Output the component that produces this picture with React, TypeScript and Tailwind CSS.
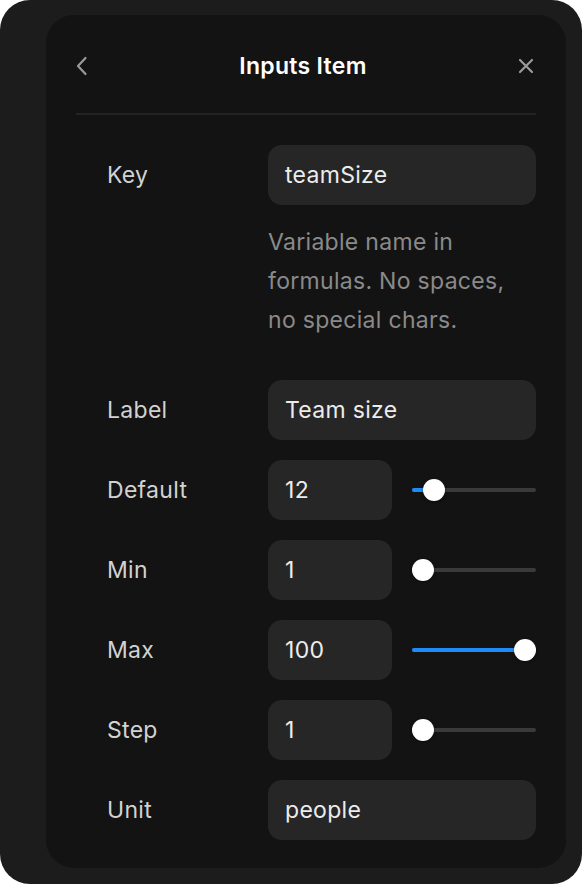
import { useState } from "react";

interface SliderProps {
  value: number;
  min: number;
  max: number;
}

const Slider = ({ value, min, max }: SliderProps) => {
  const frac = (value - min) / (max - min);
  const thumbLeft = frac * (124 - 22);
  return (
    <div className="relative ml-[20px] h-[22px] w-[124px]">
      <div className="absolute left-0 right-0 top-[9px] h-[4px] rounded-full bg-[#3a3a3a]" />
      <div
        className="absolute left-0 top-[9px] h-[4px] rounded-full bg-[#1e8cf5]"
        style={{ width: thumbLeft + 11 }}
      />
      <div
        className="absolute top-0 h-[22px] w-[22px] rounded-full bg-white shadow-[0_1px_3px_rgba(0,0,0,0.5)]"
        style={{ left: thumbLeft }}
      />
    </div>
  );
};

const Row = ({ label, children, className = "" }: { label: string; children: React.ReactNode; className?: string }) => (
  <div className={`flex items-center ${className}`}>
    <div className="w-[192px] pl-[31px] text-[23px] tracking-[0.3px] text-[#d2d2d2]">{label}</div>
    {children}
  </div>
);

const TextField = ({ value }: { value: string }) => (
  <div className="flex h-[60px] flex-1 items-center rounded-[14px] bg-[#262626] px-[17px] text-[23px] tracking-[0.3px] text-[#ececec]">
    {value}
  </div>
);

const NumberField = ({ value }: { value: string }) => (
  <div className="flex h-[60px] w-[124px] items-center rounded-[14px] bg-[#262626] px-[17px] text-[23px] tracking-[0.3px] text-[#ececec]">
    {value}
  </div>
);

export default function App() {
  const [fields] = useState([
    { label: "Default", value: 12, min: 1, max: 100 },
    { label: "Min", value: 1, min: 1, max: 100 },
    { label: "Max", value: 100, min: 1, max: 100 },
    { label: "Step", value: 1, min: 1, max: 10 },
  ]);

  return (
    <div className="bg-white font-['Inter',sans-serif]">
      <div className="h-[884px] w-[582px] rounded-[30px] bg-[#1c1c1c] pb-[16px] pl-[46px] pr-[16px] pt-[15px]">
        <div className="h-full rounded-[28px] bg-[#131313] px-[30px] pt-[37px]">
          {/* header */}
          <div className="flex h-[28px] items-center justify-between">
            <svg width="12" height="20" viewBox="0 0 12 20">
              <path d="M9.5 2 L2 10 L9.5 18" fill="none" stroke="#9a9a9a" strokeWidth="2.2" strokeLinecap="round" strokeLinejoin="round" />
            </svg>
            <h1 className="text-[23px] font-semibold tracking-[0.3px] text-white">Inputs Item</h1>
            <svg width="16" height="16" viewBox="0 0 16 16" className="mr-[2px]">
              <path d="M2 2 L14 14 M14 2 L2 14" fill="none" stroke="#9a9a9a" strokeWidth="2.2" strokeLinecap="round" />
            </svg>
          </div>
          <div className="mt-[33px] h-[2px] bg-[#232323]" />

          <Row label="Key" className="mt-[30px]">
            <TextField value="teamSize" />
          </Row>
          <p className="ml-[192px] mt-[18px] text-[23px] leading-[39px] tracking-[0.3px] text-[#8a8a8a]">
            Variable name in formulas. No spaces, no special chars.
          </p>

          <Row label="Label" className="mt-[40px]">
            <TextField value="Team size" />
          </Row>

          {fields.map((f) => (
            <Row key={f.label} label={f.label} className="mt-[20px]">
              <NumberField value={String(f.value)} />
              <Slider value={f.value} min={f.min} max={f.max} />
            </Row>
          ))}

          <Row label="Unit" className="mt-[20px]">
            <TextField value="people" />
          </Row>
        </div>
      </div>
    </div>
  );
}
